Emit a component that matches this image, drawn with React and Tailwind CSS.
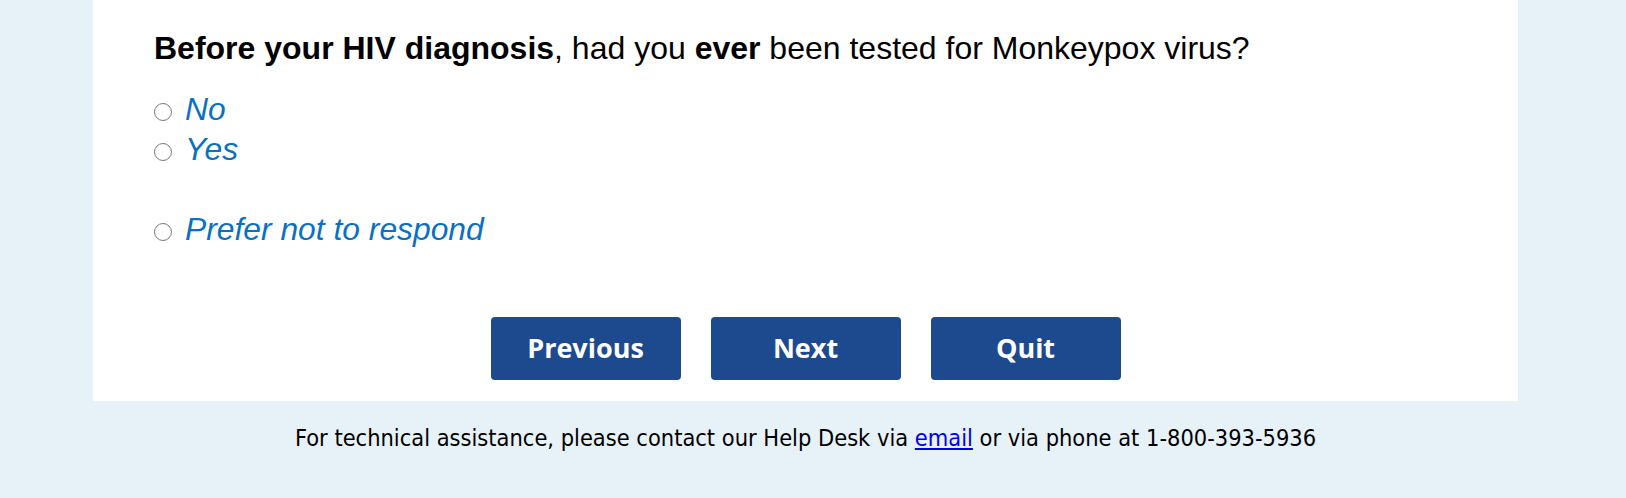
export default function App() {
  const options = [
    { label: "No" },
    { label: "Yes" },
    null,
    { label: "Prefer not to respond" },
  ];
  return (
    <div className="min-h-[498px] w-full bg-[#e7f2f8]">
      <div className="ml-[93px] w-[1425px]">
        <div className="bg-white pl-[61px] pt-[30px] pb-[21px]">
          <h1
            className="text-[32px] leading-[36px] text-black font-normal"
            style={{ fontFamily: '"Liberation Sans", Arial, sans-serif' }}
          >
            <b>Before your HIV diagnosis</b>, had you <b>ever</b> been tested for Monkeypox virus?
          </h1>
          <div
            className="mt-[23px] flex flex-col"
            style={{ fontFamily: '"Liberation Sans", Arial, sans-serif' }}
          >
            {options.map((o, i) =>
              o ? (
                <label key={i} className="flex h-[40px] items-start">
                  <span className="mt-[14px] block h-[18px] w-[18px] shrink-0 rounded-full border-[1.5px] border-[#7a7a7a] bg-white" />
                  <span className="ml-[13px] text-[31.8px] leading-[40px] italic text-[#0a70c2]">
                    {o.label}
                  </span>
                </label>
              ) : (
                <div key={i} className="h-[40px]" />
              )
            )}
          </div>
          <div className="mt-[68px] flex justify-center gap-[30px] pr-[61px]">
            {["Previous", "Next", "Quit"].map((t) => (
              <button
                key={t}
                className="h-[63px] w-[190px] rounded-[4px] bg-[#1d4a8e] text-[27px] font-bold text-white"
                style={{ fontFamily: '"Open Sans", sans-serif' }}
              >
                {t}
              </button>
            ))}
          </div>
        </div>
        <p
          className="pt-[22px] text-center text-[23.4px] leading-[30px] text-black"
          style={{ fontFamily: '"DejaVu Sans Condensed", "DejaVu Sans", sans-serif', fontStretch: "condensed" }}
        >
          For technical assistance, please contact our Help Desk via{" "}
          <a href="#" className="text-[#0000ee] underline">email</a> or via phone at 1-800-393-5936
        </p>
      </div>
    </div>
  );
}
